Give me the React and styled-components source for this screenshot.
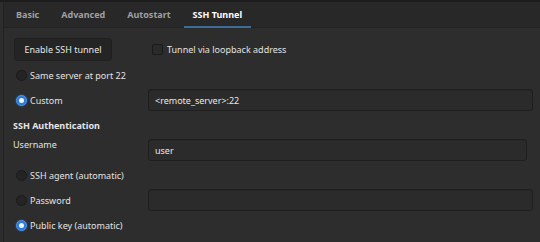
import React from 'react';
import styled, { createGlobalStyle } from 'styled-components';

const GlobalStyle = createGlobalStyle`
  html, body {
    margin: 0;
    padding: 0;
    background: #2d2d2d;
  }
  body {
    font-family: "Noto Sans", "DejaVu Sans", sans-serif;
    font-size: 9px;
    color: #e2e2e2;
  }
`;

const Window = styled.div`
  width: 540px;
  height: 242px;
  background: #2d2d2d;
  border-top: 2px solid #1c1c1c;
  box-sizing: border-box;
  overflow: hidden;
`;

const TabBar = styled.div`
  height: 26px;
  display: flex;
  align-items: stretch;
  gap: 4px;
  padding-left: 3px;
  background: #282828;
  border-bottom: 1px solid #232323;
  border-left: 1px solid #222;
  margin-left: 3px;
  box-sizing: border-box;
`;

const Tab = styled.div`
  display: flex;
  align-items: center;
  padding: 1px 9px 0;
  font-weight: bold;
  font-size: 9px;
  color: ${p => (p.$active ? '#ffffff' : '#a0a0a0')};
  border-bottom: 2px solid ${p => (p.$active ? '#3b6d98' : 'transparent')};
  margin-bottom: -1px;
`;

const Body = styled.div`
  display: grid;
  grid-template-columns: 135px 385px;
  grid-template-rows: 23px repeat(7, 22px);
  row-gap: 3px;
  padding: 10px 0 0 9px;
  margin-left: 3px;
  border-left: 1px solid #222;
  height: 214px;
  box-sizing: border-box;
`;

const Button = styled.div`
  width: 98px;
  margin-left: 1px;
  display: flex;
  align-items: center;
  justify-content: center;
  background: #242424;
  border: 1px solid #202020;
  border-radius: 3px;
  box-sizing: border-box;
  color: #e6e6e6;
`;

const Check = styled.label`
  display: flex;
  align-items: center;
  gap: 4px;
  padding-left: 4px;
`;

const Box = styled.span`
  width: 11px;
  height: 11px;
  box-sizing: border-box;
  background: #2a2a2a;
  border: 1px solid #1a1a1a;
  border-radius: 2px;
`;

const Radio = styled.label`
  grid-column: ${p => (p.$span ? '1 / 3' : '1')};
  display: flex;
  align-items: center;
  gap: 3px;
  padding-left: 3px;
`;

const Dot = styled.span`
  width: 11px;
  height: 11px;
  border-radius: 50%;
  box-sizing: border-box;
  display: flex;
  align-items: center;
  justify-content: center;
  background: ${p => (p.$on ? '#2f7ad8' : '#242424')};
  border: 1px solid ${p => (p.$on ? '#4b93ea' : '#1a1a1a')};
  box-shadow: ${p => (p.$on ? '0 0 2px rgba(70,140,230,0.6)' : 'none')};

  &::after {
    content: '';
    display: ${p => (p.$on ? 'block' : 'none')};
    width: 5px;
    height: 5px;
    border-radius: 50%;
    background: #eef6ff;
  }
`;

const Entry = styled.div`
  width: ${p => p.$w || 385}px;
  display: flex;
  align-items: center;
  padding-left: 6px;
  box-sizing: border-box;
  background: #2b2b2b;
  border: 1px solid #1f1f1f;
  border-radius: 3px;
  box-shadow: inset 0 1px 0 #262626;
  color: #e8e8e8;
`;

const Heading = styled.div`
  grid-column: 1 / 3;
  display: flex;
  align-items: center;
  font-weight: bold;
  color: #e6e6e6;
`;

const FieldLabel = styled.div`
  line-height: 12px;
`;

export default function App() {
  return (
    <>
      <GlobalStyle />
      <Window>
        <TabBar>
          <Tab>Basic</Tab>
          <Tab>Advanced</Tab>
          <Tab>Autostart</Tab>
          <Tab $active>SSH Tunnel</Tab>
        </TabBar>
        <Body>
          <Button>Enable SSH tunnel</Button>
          <Check>
            <Box />
            Tunnel via loopback address
          </Check>

          <Radio $span>
            <Dot />
            Same server at port 22
          </Radio>

          <Radio>
            <Dot $on />
            Custom
          </Radio>
          <Entry>&lt;remote_server&gt;:22</Entry>

          <Heading>SSH Authentication</Heading>

          <FieldLabel>Username</FieldLabel>
          <Entry $w={379}>user</Entry>

          <Radio $span>
            <Dot />
            SSH agent (automatic)
          </Radio>

          <Radio>
            <Dot />
            Password
          </Radio>
          <Entry />

          <Radio $span>
            <Dot $on />
            Public key (automatic)
          </Radio>
        </Body>
      </Window>
    </>
  );
}
